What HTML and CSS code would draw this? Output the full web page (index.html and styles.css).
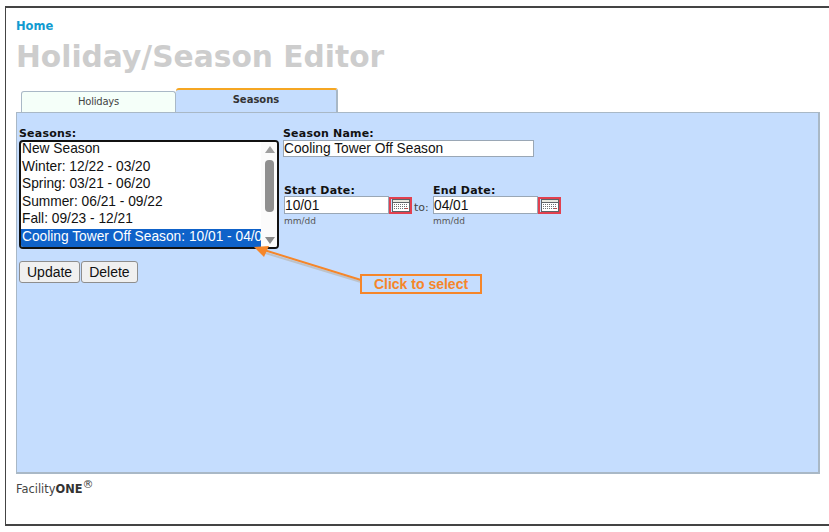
FILE: index.html
```html
<!DOCTYPE html>
<html lang="en">
<head>
  <meta charset="UTF-8">
  <title>Holiday/Season Editor</title>
  <link rel="stylesheet" href="styles.css">
</head>
<body>

<div class="page">
  <a class="home-link" href="#">Home</a>
  <h1>Holiday/Season Editor</h1>

  <div class="tabs">
    <div class="tab">Holidays</div>
    <div class="tab active">Seasons</div>
  </div>

  <div class="panel">
    <div class="left-col">
      <label>Seasons:</label>
      <div class="season-list">
        <div class="options">
          <div class="option">New Season</div>
          <div class="option">Winter: 12/22 - 03/20</div>
          <div class="option">Spring: 03/21 - 06/20</div>
          <div class="option">Summer: 06/21 - 09/22</div>
          <div class="option">Fall: 09/23 - 12/21</div>
          <div class="option selected">Cooling Tower Off Season: 10/01 - 04/01</div>
        </div>
        <div class="scrollbar">
          <span class="arrow-up"></span>
          <span class="thumb"></span>
          <span class="arrow-down"></span>
        </div>
      </div>
      <div class="buttons">
        <button type="button">Update</button>
        <button type="button">Delete</button>
      </div>
    </div>

    <div class="right-col">
      <label>Season Name:</label>
      <input class="name-input" type="text" value="Cooling Tower Off Season">

      <div class="dates">
        <div class="date-group">
          <label>Start Date:</label>
          <div class="date-row">
            <input class="date-input" type="text" value="10/01">
            <span class="cal-btn">
              <svg width="18" height="13" viewBox="0 0 18 13">
                <rect width="18" height="13" fill="#5f6368"/>
                <rect x="1" y="1" width="16" height="2" fill="#e8e8e0"/>
                <rect x="1" y="4" width="16" height="8" fill="#fff"/>
                <path d="M2 5.5h14M2 7.5h14M2 9.5h14" stroke="#6f7075" stroke-dasharray="1 1"/>
                <path d="M13 9.5h3" stroke="#d33" stroke-dasharray="1 1"/>
              </svg>
            </span>
          </div>
          <span class="hint">mm/dd</span>
        </div>
        <span class="to-label">to:</span>
        <div class="date-group">
          <label>End Date:</label>
          <div class="date-row">
            <input class="date-input" type="text" value="04/01">
            <span class="cal-btn">
              <svg width="18" height="13" viewBox="0 0 18 13">
                <rect width="18" height="13" fill="#5f6368"/>
                <rect x="1" y="1" width="16" height="2" fill="#e8e8e0"/>
                <rect x="1" y="4" width="16" height="8" fill="#fff"/>
                <path d="M2 5.5h14M2 7.5h14M2 9.5h14" stroke="#6f7075" stroke-dasharray="1 1"/>
                <path d="M13 9.5h3" stroke="#d33" stroke-dasharray="1 1"/>
              </svg>
            </span>
          </div>
          <span class="hint">mm/dd</span>
        </div>
      </div>
    </div>
  </div>

  <div class="footer">Facility<b>ONE</b><sup>®</sup></div>
</div>

<!-- Annotation on top of the screenshot -->
<svg class="callout-arrow" width="120" height="50" viewBox="0 0 120 50">
  <path d="M8 5 L107 35" stroke="#b9b2a8" stroke-width="2" opacity="0.6" transform="translate(0 2)"/>
  <path d="M10 5 L107 35" stroke="#f5862a" stroke-width="2"/>
  <path d="M0 2 L15 1 L10 12 Z" fill="#f5862a"/>
</svg>
<div class="callout">Click to select</div>

</body>
</html>
```

FILE: styles.css
```css
body {
  margin: 0;
  background: #fff;
  font-family: "DejaVu Sans", Verdana, sans-serif;
}

.page {
  margin: 6px 0 6px 5px;
  height: 520px;
  box-sizing: border-box;
  border: 1px solid #444;
  border-top-width: 2px;
  border-bottom-width: 2px;
  border-right: none;
  padding: 11px 9px 0 10px;
}

.home-link {
  display: block;
  color: #129bd0;
  font-size: 11.5px;
  font-weight: bold;
  line-height: 14px;
  text-decoration: none;
}

h1 {
  margin: 6px 0 0;
  color: #cdcdcd;
  font-size: 29.7px;
  line-height: 36px;
  font-weight: bold;
  white-space: nowrap;
}

/* Tabs */
.tabs {
  display: flex;
  align-items: flex-end;
  height: 24px;
  margin: 13px 0 0 5px;
}

.tab {
  width: 155px;
  height: 21px;
  box-sizing: border-box;
  background: #f5fff9;
  border: 1px solid #a9b8c6;
  border-bottom: none;
  border-radius: 3px 3px 0 0;
  color: #444;
  font-size: 10px;
  letter-spacing: -0.2px;
  line-height: 20px;
  text-align: center;
}

.tab.active {
  width: 162px;
  height: 24px;
  background: #c5ddfe;
  border-top: 2px solid #f5a623;
  border-right: 2px solid #a9b8c6;
  border-left: none;
  color: #333;
  font-weight: bold;
  letter-spacing: 0;
  line-height: 20px;
}

/* Panel */
.panel {
  display: flex;
  height: 362px;
  box-sizing: border-box;
  background: #c5ddfe;
  border: 1px solid #a9b8c6;
  border-width: 1px 2px 2px 1px;
  padding: 14px 0 0 2px;
}

label {
  display: block;
  color: #111;
  font-size: 11px;
  font-weight: bold;
  line-height: 13px;
  letter-spacing: 0.2px;
}

.left-col {
  width: 264px;
}

.season-list {
  display: flex;
  width: 260px;
  height: 109px;
  box-sizing: border-box;
  background: #fff;
  border: 2px solid #111;
  border-radius: 4px;
  overflow: hidden;
}

.options {
  flex: 1;
  min-width: 0;
  margin-top: -1px;
  color: #111;
  font-family: "Liberation Sans", Arial, sans-serif;
  font-size: 13.75px;
}

.option {
  height: 17.6px;
  padding-left: 1px;
  line-height: 16px;
  white-space: nowrap;
  overflow: hidden;
}

.option.selected {
  background: #0f62c9;
  color: #fff;
}

.scrollbar {
  display: flex;
  flex-direction: column;
  align-items: center;
  width: 16px;
  padding: 4px 0 3px 1px;
  box-sizing: border-box;
  background: #fbfbfb;
}

.arrow-up,
.arrow-down {
  width: 0;
  height: 0;
  border-left: 5px solid transparent;
  border-right: 5px solid transparent;
}

.arrow-up {
  border-bottom: 7px solid #a0a0a0;
}

.arrow-down {
  margin-top: auto;
  border-top: 7px solid #8a8a8a;
}

.thumb {
  width: 9px;
  height: 52px;
  margin-top: 7px;
  background: #8f8f8f;
  border-radius: 4px;
}

.buttons {
  display: flex;
  gap: 1px;
  margin-top: 12px;
}

button {
  height: 22px;
  padding: 0 7px;
  background: #f0f0f0;
  border: 1px solid #8e8e8e;
  border-radius: 3px;
  color: #111;
  font-family: "Liberation Sans", Arial, sans-serif;
  font-size: 14px;
}

input {
  box-sizing: border-box;
  height: 18px;
  padding: 0;
  background: #fff;
  border: 1px solid #9aa7b5;
  color: #111;
  font-family: "Liberation Sans", Arial, sans-serif;
  font-size: 13.75px;
}

.name-input {
  display: block;
  width: 251px;
  height: 17px;
}

.dates {
  display: flex;
  margin: 27px 0 0 1px;
}

.date-row {
  display: flex;
  align-items: center;
  margin-top: -1px;
}

.date-input {
  width: 105px;
  height: 18px;
}

.cal-btn {
  display: flex;
  align-items: center;
  justify-content: center;
  width: 23px;
  height: 17px;
  box-sizing: border-box;
  border: 2px solid #e2404f;
}

.hint {
  display: block;
  margin-top: 1px;
  color: #555;
  font-size: 9px;
  line-height: 12px;
}

.to-label {
  width: 21px;
  margin-top: 16px;
  padding-left: 2px;
  box-sizing: border-box;
  color: #444;
  font-size: 11px;
  line-height: 16px;
}

.footer {
  margin-top: 8px;
  color: #444;
  font-size: 11.4px;
  line-height: 14px;
}

.footer b {
  color: #333;
}

.footer sup {
  font-size: 11px;
  line-height: 0;
}

/* Annotation */
.callout-arrow {
  position: absolute;
  left: 254px;
  top: 245px;
}

.callout {
  position: absolute;
  left: 360px;
  top: 274px;
  width: 122px;
  height: 20px;
  box-sizing: border-box;
  border: 2px solid #f5862a;
  color: #f5862a;
  font-family: "Liberation Sans", Arial, sans-serif;
  font-size: 14px;
  font-weight: bold;
  line-height: 16px;
  text-align: center;
}
```
